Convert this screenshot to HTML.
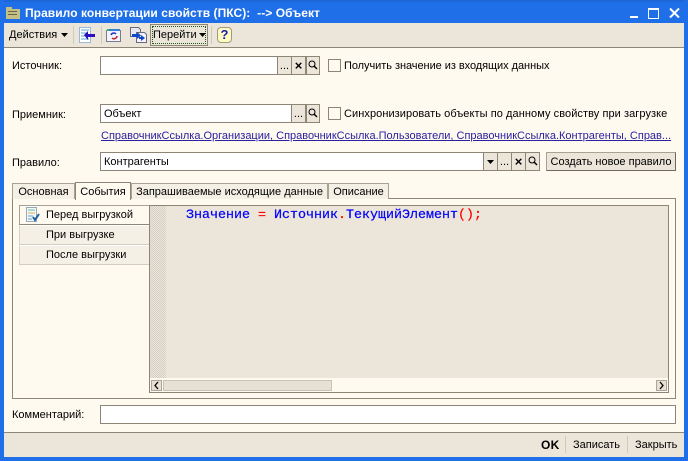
<!DOCTYPE html>
<html><head><meta charset="utf-8"><style>
html,body{margin:0;padding:0}
#w{position:relative;width:688px;height:461px;overflow:hidden;background:#fffaf0;font:11px "Liberation Sans",sans-serif;color:#000}
#w div,#w svg,#w a{position:absolute;white-space:nowrap}
.t{line-height:14px;height:14px}
.in{background:#fff;border:1px solid #8d8677;box-sizing:border-box}
.b{background:#ece5da;border:1px solid #8d8677;box-sizing:border-box;border-left:0;text-align:center;line-height:19px}
.x{font-weight:700;font-size:13px;line-height:17px}
.tab{background:#f5f0e6;border:1px solid #a8a294;border-bottom:0;box-sizing:border-box;height:17px;top:182px;line-height:17px;text-align:center}
.it{left:19px;width:131px;height:20px;box-sizing:border-box;background:#f5f0e6;border:1px solid #d8d3c6;border-top:1px solid #fff;border-bottom:1px solid #d3cdbf;line-height:18px;padding-left:26px}
.sep{width:1px;background:#d0cabc}
</style></head><body><div id="w">
<div style="left:0;top:0;width:688px;height:23px;background:#1f6fe8"></div>
<div style="left:0;top:0;width:688px;height:2px;background:#1c66d8"></div>
<div style="left:0;top:0;width:4px;height:461px;background:#1f6fe8"></div>
<div style="left:684px;top:0;width:4px;height:461px;background:#1f6fe8"></div>
<div style="left:0;top:457px;width:688px;height:4px;background:#1f6fe8"></div>
<svg style="left:6px;top:6px" width="14" height="13" viewBox="0 0 14 13"><path d="M0 1h6v2h8v10H0z" fill="#c6bf85"/><path d="M2 5h9v1H2zM2 8h9v1H2z" fill="#66664a"/></svg>
<div class="t" style="left:25px;top:6px;color:#fff;font-weight:700;font-size:12px;letter-spacing:.06px">Правило конвертации свойств (ПКС):&nbsp; --&gt; Объект</div>
<div style="left:630px;top:16px;width:8px;height:2px;background:#fff"></div>
<div style="left:648px;top:8px;width:9px;height:8px;border:1px solid #fff;border-top-width:2px"></div>
<svg style="left:669px;top:8px" width="11" height="10" viewBox="0 0 11 10"><path d="M1 0.500L10 9.500M10 0.500L1 9.500" stroke="#fff" stroke-width="2"/></svg>

<div style="left:4px;top:23px;width:680px;height:24px;background:#ece5da;border-bottom:1px solid #8d8677"></div>
<div class="t" style="left:9px;top:28px">Действия</div>
<svg style="left:61px;top:33px" width="7" height="4"><path d="M0 0h7L3.500 4z" fill="#000"/></svg>
<div class="sep" style="left:73px;top:26px;height:18px"></div>
<svg style="left:79px;top:27px" width="17" height="17" viewBox="0 0 17 17"><path d="M.5.500h11v15H.5z" fill="#fff" stroke="#9fb8d8" stroke-width="1"/><path d="M2 3h8M2 6h5M2 9h5M2 12h8" stroke="#4fb0c8"/><path d="M5 8l4-4v3h7v3H9v3z" fill="#2a10c0"/></svg>
<div class="sep" style="left:101px;top:26px;height:18px"></div>
<svg style="left:106px;top:28px" width="16" height="15" viewBox="0 0 16 15"><path d="M.5 2.500h14v11H.5z" fill="#f4f4ff" stroke="#7a7a90"/><path d="M1 1h13v2H1z" fill="#3a80d8"/><path d="M1 1h2v2H1z" fill="#30c050"/><path d="M5 7a3 3 0 0 1 5-1" stroke="#2030c0" fill="none" stroke-width="1.500"/><path d="M11 8a3 3 0 0 1-5 2" stroke="#c02020" fill="none" stroke-width="1.500"/></svg>
<svg style="left:130px;top:27px" width="17" height="17" viewBox="0 0 17 17"><path d="M.5.500h8l2 2v7h-10z" fill="#e8e8f0" stroke="#6a6a80"/><path d="M6.500 5.500h8l2 2v8h-10z" fill="#f4f4fa" stroke="#6a6a80"/><path d="M2 7h5V5l4 3.500L7 12v-2H2zM15 11l-4 3v-2H9v-2h2V8z" fill="#1048c8"/></svg>
<div style="left:150px;top:24px;width:58px;height:22px;box-sizing:border-box;border:1px solid #8d8677;background:#ece5da"></div>
<div style="left:152px;top:26px;width:54px;height:18px;box-sizing:border-box;border:1px dotted #1a5a1a"></div>
<div class="t" style="left:153px;top:28px">Перейти</div>
<svg style="left:199px;top:33px" width="7" height="4"><path d="M0 0h7L3.500 4z" fill="#000"/></svg>
<div class="sep" style="left:211px;top:26px;height:18px"></div>
<div style="left:217px;top:27px;width:15px;height:16px;box-sizing:border-box;border:1px solid #a09a80;border-radius:4px;background:#fffbc0;color:#1a20b0;font-weight:700;font-size:13px;line-height:14px;text-align:center">?</div>

<div class="t" style="left:12px;top:59px">Источник:</div>
<div class="in" style="left:100px;top:56px;width:178px;height:19px"></div>
<div class="b" style="left:277px;top:56px;width:15px;height:19px;border-left:1px solid #8d8677">...</div>
<div class="b x" style="left:292px;top:56px;width:14px;height:19px">×</div>
<svg style="left:306px;top:56px" width="14" height="19"><rect x=".5" y=".5" width="13" height="18" fill="#ece5da" stroke="#8d8677"/><circle cx="6" cy="8" r="3" fill="none" stroke="#000" stroke-width="1"/><path d="M8 10l3 3" stroke="#000" stroke-width="1.500"/></svg>
<div style="left:328px;top:59px;width:13px;height:13px;box-sizing:border-box;border:1px solid #8d8677;background:#fffaf0"></div>
<div class="t" style="left:344px;top:59px;letter-spacing:-.05px">Получить значение из входящих данных</div>

<div class="t" style="left:12px;top:108px">Приемник:</div>
<div class="in" style="left:100px;top:104px;width:192px;height:19px;padding-left:3px;line-height:18px">Объект</div>
<div class="b" style="left:291px;top:104px;width:15px;height:19px;border-left:1px solid #8d8677">...</div>
<svg style="left:306px;top:104px" width="14" height="19"><rect x=".5" y=".5" width="13" height="18" fill="#ece5da" stroke="#8d8677"/><circle cx="6" cy="8" r="3" fill="none" stroke="#000" stroke-width="1"/><path d="M8 10l3 3" stroke="#000" stroke-width="1.500"/></svg>
<div style="left:328px;top:107px;width:13px;height:13px;box-sizing:border-box;border:1px solid #8d8677;background:#fffaf0"></div>
<div class="t" style="left:344px;top:107px;letter-spacing:.07px">Синхронизировать объекты по данному свойству при загрузке</div>
<div class="t" style="left:101px;top:129px;color:#2a20a0;text-decoration:underline">СправочникСсылка.Организации, СправочникСсылка.Пользователи, СправочникСсылка.Контрагенты, Справ...</div>

<div class="t" style="left:12px;top:156px">Правило:</div>
<div class="in" style="left:100px;top:152px;width:384px;height:19px;padding-left:3px;line-height:19px">Контрагенты</div>
<div class="b" style="left:483px;top:152px;width:15px;height:19px;border-left:1px solid #8d8677"></div>
<svg style="left:487px;top:160px" width="7" height="4"><path d="M0 0h7L3.500 4z" fill="#000"/></svg>
<div class="b" style="left:498px;top:152px;width:14px;height:19px">...</div>
<div class="b x" style="left:512px;top:152px;width:14px;height:19px">×</div>
<svg style="left:526px;top:152px" width="14" height="19"><rect x="-.5" y=".5" width="14" height="18" fill="#ece5da" stroke="#8d8677"/><circle cx="6" cy="8" r="3" fill="none" stroke="#000" stroke-width="1"/><path d="M8 10l3 3" stroke="#000" stroke-width="1.500"/></svg>
<div style="left:546px;top:152px;width:130px;height:19px;box-sizing:border-box;background:#ece5da;border:1px solid #a8a294;border-right-color:#6f6a5e;border-bottom-color:#6f6a5e;text-align:center;line-height:18px">Создать новое правило</div>

<div style="left:12px;top:198px;width:664px;height:201px;box-sizing:border-box;border:1px solid #8d8677;background:#fffaf0"></div>
<div class="tab" style="left:12px;width:63px;top:183px;height:16px">Основная</div>
<div class="tab" style="left:75px;width:56px;background:#fffaf0;border-color:#8d8677;height:18px;z-index:2;line-height:18px">События</div>
<div class="tab" style="left:131px;width:197px;top:183px;height:16px">Запрашиваемые исходящие данные</div>
<div class="tab" style="left:328px;width:61px;top:183px;height:16px">Описание</div>

<div style="left:19px;top:205px;width:131px;height:20px;box-sizing:border-box;background:#fffaf0;border:1px solid #a8a294;border-right:0;border-bottom:1px solid #8d8677;line-height:18px;padding-left:26px">Перед выгрузкой</div>
<svg style="left:26px;top:207px" width="15" height="16" viewBox="0 0 15 16"><path d="M.5.500h10v14H.5z" fill="#f4f8f8" stroke="#9aa8b8"/><path d="M2 3h7" stroke="#60c090"/><path d="M2 6h7" stroke="#e0b060"/><path d="M2 9h5M2 12h4" stroke="#60a0c0"/><path d="M7 10l2 3 4-6" fill="none" stroke="#1a6098" stroke-width="2"/></svg>
<div class="it" style="top:225px">При выгрузке</div>
<div class="it" style="top:245px">После выгрузки</div>

<div style="left:149px;top:205px;width:520px;height:188px;box-sizing:border-box;border:1px solid #8d8677;background:#ece5da"></div>
<div style="left:150px;top:206px;width:16px;height:172px;background:repeating-conic-gradient(#ece5da 0 25%,#d5d0c5 0 50%) 0 0/2px 2px"></div>
<div style="left:186px;top:208px;font:13.330px/16px 'Liberation Mono',monospace;color:#0000ff;-webkit-text-stroke:.2px #0000ff">Значение <span style="color:#f00;-webkit-text-stroke-color:#f00">=</span> Источник<span style="color:#f00;-webkit-text-stroke-color:#f00">.</span>ТекущийЭлемент<span style="color:#f00;-webkit-text-stroke-color:#f00">();</span></div>
<div style="left:150px;top:378px;width:518px;height:14px;background:#fffaf0"></div>
<div style="left:151px;top:380px;width:11px;height:11px;box-sizing:border-box;border:1px solid #aaa598;background:#e6e1d4"></div>
<svg style="left:153px;top:381px" width="7" height="9"><path d="M5 1L2 4.500 5 8" fill="none" stroke="#000" stroke-width="1.300"/></svg>
<div style="left:163px;top:380px;width:169px;height:11px;box-sizing:border-box;border:1px solid #c8c3b5;background:#e6e1d4"></div>
<div style="left:656px;top:380px;width:11px;height:11px;box-sizing:border-box;border:1px solid #aaa598;background:#e6e1d4"></div>
<svg style="left:658px;top:381px" width="7" height="9"><path d="M2 1l3 3.500L2 8" fill="none" stroke="#000" stroke-width="1.300"/></svg>

<div class="t" style="left:12px;top:408px">Комментарий:</div>
<div class="in" style="left:100px;top:405px;width:576px;height:19px"></div>

<div style="left:4px;top:432px;width:680px;height:25px;box-sizing:border-box;background:#ece5da;border-top:1px solid #8d8677"></div>
<div class="t" style="left:541px;top:438px;font-weight:700;font-size:12px;letter-spacing:.3px">OK</div>
<div class="sep" style="left:565px;top:436px;height:17px"></div>
<div class="t" style="left:573px;top:438px">Записать</div>
<div class="sep" style="left:627px;top:436px;height:17px"></div>
<div class="t" style="left:635px;top:438px">Закрыть</div>
</div></body></html>
